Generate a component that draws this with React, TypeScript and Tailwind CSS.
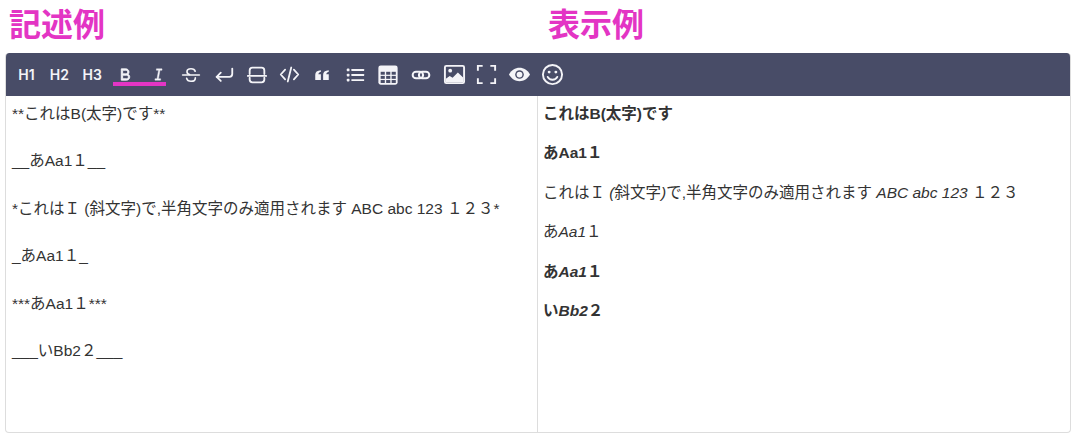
import React from "react";
import { RiBold, RiItalic } from "react-icons/ri";

const font = "font-['Liberation_Sans','Noto_Sans_CJK_JP',sans-serif]";
const DARK = "#484c67";

function Svg({ children, w = 24, h = 24 }: { children: React.ReactNode; w?: number; h?: number }) {
  return (
    <svg viewBox="0 0 24 24" width={w} height={h} fill="none" stroke="currentColor" strokeWidth="2" strokeLinecap="round" strokeLinejoin="round">
      {children}
    </svg>
  );
}

function Btn({ children }: { children: React.ReactNode }) {
  return <div className="flex h-full w-[32.9px] shrink-0 items-center justify-center">{children}</div>;
}

const source = [
  "**これはB(太字)です**",
  "__あAa1１__",
  "*これはＩ (斜文字)で,半角文字のみ適用されます ABC abc 123 １２３*",
  "_あAa1１_",
  "***あAa1１***",
  "___いBb2２___",
];

export default function App() {
  return (
    <div className={`h-[438px] w-[1075px] overflow-hidden bg-white ${font}`}>
      <div className="flex h-[53px] items-center pl-[9px] pb-[3px] text-[32px] font-bold leading-none text-[#e335c4]">
        <div className="w-[539px]">記述例</div>
        <div>表示例</div>
      </div>
      <div className="ml-[5px] flex h-[380px] w-[1066px] flex-col overflow-hidden rounded-[4px] border-x border-b border-[#ddd]">
        <div className="-mx-px flex h-[43px] shrink-0 items-center rounded-t-[4px] bg-[#484c67] pl-[5px] font-['Inter',sans-serif] text-[14px] font-semibold text-[#f4f4f8]">
          <Btn>H1</Btn>
          <Btn>H2</Btn>
          <Btn>H3</Btn>
          <div className="relative flex h-full items-center">
            <Btn><RiBold size={17} stroke="currentColor" strokeWidth={1.2} /></Btn>
            <Btn><RiItalic size={17} stroke="currentColor" strokeWidth={0.6} /></Btn>
            <div className="absolute bottom-[10px] left-[4px] h-[4px] w-[53px] bg-[#e335c4]" />
          </div>
          <Btn>
            <Svg w={20} h={20}>
              <path d="M2 12h20" />
              <path d="M17 7.500C16.500 5.500 14.500 4.500 12 4.500S7.200 5.700 7.200 8c0 1.600 1 2.800 3 3.500M17.200 15.500c0 2.600-2.200 4-5.200 4-2.700 0-4.700-1.200-5.200-3.500" />
            </Svg>
          </Btn>
          <Btn>
            <Svg w={22} h={22}>
              <path d="M21 5v6a3 3 0 0 1-3 3H4" />
              <path d="M8.500 9.500 4 14l4.500 4.500" />
            </Svg>
          </Btn>
          <Btn>
            <Svg w={22} h={22}>
              <path d="M4 11V7a3 3 0 0 1 3-3h10a3 3 0 0 1 3 3v4" />
              <path d="M4 15v2a3 3 0 0 0 3 3h10a3 3 0 0 0 3-3v-2" />
              <path d="M2 13h20" />
            </Svg>
          </Btn>
          <Btn>
            <Svg w={21} h={21}>
              <path d="M7 6.500 2 12l5 5.500M17 6.500l5 5.500-5 5.500M14 4l-4 16" />
            </Svg>
          </Btn>
          <Btn>
            <svg viewBox="0 0 24 24" width="18" height="18" fill="currentColor">
              <path d="M10.500 5.500v2C8.300 8 7.300 9.300 7.200 11h3.300v7.500H3V11.500C3 8 5.500 5.800 10.500 5.500ZM21 5.500v2c-2.200.5-3.200 1.800-3.300 3.500H21v7.500h-7.500V11.500c0-3.500 2.500-5.700 7.500-6Z" />
            </svg>
          </Btn>
          <Btn>
            <svg viewBox="0 0 24 24" width="22" height="22" fill="currentColor">
              <rect x="3" y="5" width="3" height="3" rx="1" />
              <rect x="3" y="10.500" width="3" height="3" rx="1" />
              <rect x="3" y="16" width="3" height="3" rx="1" />
              <rect x="8" y="5.500" width="14" height="2" rx=".5" />
              <rect x="8" y="11" width="14" height="2" rx=".5" />
              <rect x="8" y="16.500" width="14" height="2" rx=".5" />
            </svg>
          </Btn>
          <Btn>
            <svg viewBox="0 0 24 24" width="22" height="22">
              <rect x="1.500" y="1.500" width="21" height="21" rx="2.500" fill="currentColor" />
              {[4, 10, 16].map((x) =>
                [8.500, 13, 17.500].map((y) => (
                  <rect key={`${x}-${y}`} x={x} y={y} width="4.500" height="3.200" fill={DARK} />
                ))
              )}
            </svg>
          </Btn>
          <Btn>
            <svg viewBox="0 0 24 24" width="20" height="20" fill="none" stroke="currentColor" strokeWidth="2.400">
              <rect x="2" y="8" width="12.500" height="8" rx="4" />
              <rect x="9.500" y="8" width="12.500" height="8" rx="4" />
            </svg>
          </Btn>
          <Btn>
            <svg viewBox="0 0 24 24" width="23" height="23">
              <rect x="2" y="3" width="20" height="18" rx="1.500" fill="none" stroke="currentColor" strokeWidth="2" />
              <circle cx="7.500" cy="8" r="2" fill="currentColor" />
              <path d="M3 20v-3.500l4-3 3 2 5.500-5.500L21 15v5Z" fill="currentColor" />
            </svg>
          </Btn>
          <Btn>
            <svg viewBox="0 0 24 24" width="23" height="23" fill="none" stroke="currentColor" strokeWidth="2">
              <path d="M8 3H3v5M16 3h5v5M3 16v5h5M21 16v5h-5" />
            </svg>
          </Btn>
          <Btn>
            <svg viewBox="0 0 24 24" width="23" height="23">
              <path d="M1 12c2.500-4.500 6.500-7 11-7s8.500 2.500 11 7c-2.500 4.500-6.500 7-11 7S3.500 16.500 1 12Z" fill="currentColor" />
              <circle cx="12" cy="12" r="4.500" fill={DARK} />
              <circle cx="12" cy="12" r="3" fill="currentColor" />
            </svg>
          </Btn>
          <Btn>
            <svg viewBox="0 0 24 24" width="23" height="23" fill="none" stroke="currentColor" strokeWidth="2" strokeLinecap="round">
              <circle cx="12" cy="12" r="10" />
              <circle cx="8.500" cy="9.500" r="1.500" fill="currentColor" stroke="none" />
              <circle cx="15.500" cy="9.500" r="1.500" fill="currentColor" stroke="none" />
              <path d="M7 14.500c1 2 2.800 3 5 3s4-1 5-3" />
            </svg>
          </Btn>
        </div>
        <div className="flex min-h-0 flex-1">
          <div className="w-[532px] shrink-0 border-r border-[#ddd] px-[6px] pt-[6px] text-[15.5px] leading-[23.7px] text-[#333]">
            {source.map((s) => (
              <div key={s} className="mb-[23.7px] whitespace-nowrap">{s}</div>
            ))}
          </div>
          <div className="flex-1 px-[5px] pt-[6px] text-[15.5px] leading-[23.7px] text-[#333]">
            <p className="mb-[15.7px] font-bold">これはB(太字)です</p>
            <p className="mb-[15.7px] font-bold">あAa1１</p>
            <p className="mb-[15.7px]">これはＩ <em>(</em>斜文字<em>)</em>で,半角文字のみ適用されます <em>ABC abc 123</em> １２３</p>
            <p className="mb-[15.7px]">あ<em>Aa1</em>１</p>
            <p className="mb-[15.7px] font-bold">あ<em>Aa1</em>１</p>
            <p className="font-bold">い<em>Bb2</em>２</p>
          </div>
        </div>
      </div>
    </div>
  );
}
